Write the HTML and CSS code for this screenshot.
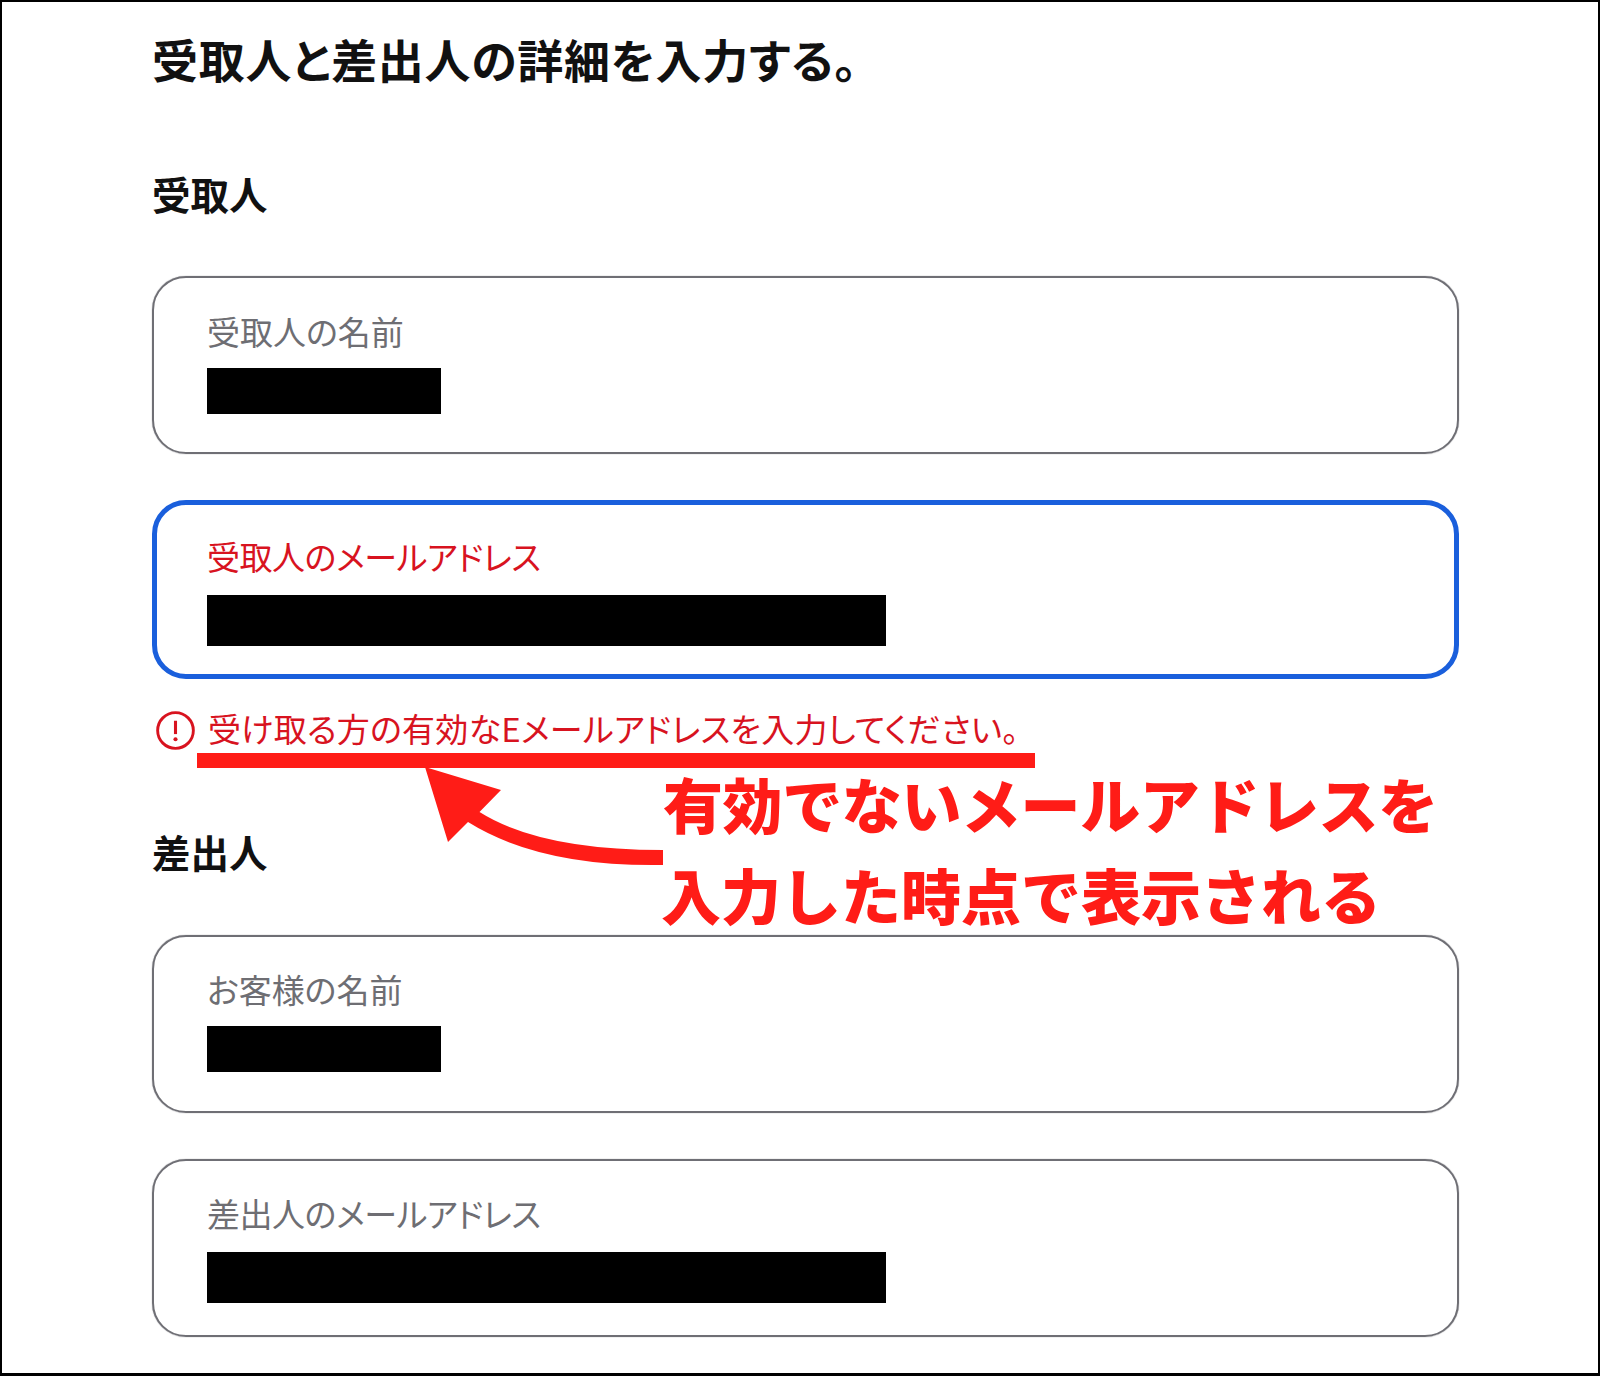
FILE: index.html
```html
<!DOCTYPE html>
<html lang="ja">
<head>
    <meta charset="UTF-8">
    <meta name="viewport" content="width=device-width, initial-scale=1.0">
    <title>受取人と差出人の詳細</title>
    <link rel="stylesheet" href="styles.css">
</head>
<body>
    <div class="page">
        <h1 class="title">受取人と差出人の詳細を入力する。</h1>

        <h2 class="section-title">受取人</h2>
        <div class="field">
            <div class="field-label">受取人の名前</div>
            <div class="redacted redacted-name"></div>
        </div>
        <div class="field field-error">
            <div class="field-label label-email">受取人のメールアドレス</div>
            <div class="redacted redacted-email"></div>
        </div>
        <div class="error-row">
            <svg class="error-icon" viewBox="0 0 38 38" aria-hidden="true">
                <circle cx="19" cy="19" r="17.4" fill="none" stroke="currentColor" stroke-width="2.8"/>
                <path d="M19 9.500v13" fill="none" stroke="currentColor" stroke-width="3"/>
                <circle cx="19" cy="27.500" r="2" fill="currentColor"/>
            </svg>
            <span>受け取る方の有効なEメールアドレスを入力してください。</span>
        </div>

        <h2 class="section-title section-sender">差出人</h2>
        <div class="field field-sender">
            <div class="field-label">お客様の名前</div>
            <div class="redacted redacted-name"></div>
        </div>
        <div class="field field-sender">
            <div class="field-label label-email">差出人のメールアドレス</div>
            <div class="redacted redacted-email"></div>
        </div>

        <!-- red annotation drawn over the form -->
        <div class="note-underline"></div>
        <svg class="note-arrow" viewBox="0 0 260 120" aria-hidden="true">
            <path d="M12 0L88 23L66.500 45Q127 83 250 83L250 98Q127 100 55 55L35 75Z" fill="#ff1c17"/>
        </svg>
        <div class="note-text">
            <div class="note-line-first">有効でないメールアドレスを</div>
            <div class="note-line-second">入力した時点で表示される</div>
        </div>
    </div>
</body>
</html>
```

FILE: styles.css
```css
* {
    box-sizing: border-box;
}

body {
    margin: 0;
    background: #ffffff;
    font-family: "Noto Sans CJK JP", "Noto Sans", sans-serif;
}

.page {
    position: relative;
    width: 1600px;
    height: 1376px;
    border: solid #000000;
    border-width: 2px 2px 3px 2px;
    padding: 26px 139px 0 150px;
    overflow: hidden;
}

.title {
    margin: 0 0 80px 0;
    font-size: 46px;
    line-height: 60px;
    font-weight: 700;
    letter-spacing: 0.7px;
    color: #111111;
    font-feature-settings: "palt";
}

.section-title {
    margin: 0 0 58px 0;
    font-size: 38.500px;
    line-height: 50px;
    font-weight: 700;
    color: #111111;
}

.section-sender {
    margin-top: 76px;
    margin-bottom: 59px;
}

.field {
    height: 178px;
    margin-bottom: 46px;
    padding: 31px 50px 0 53px;
    border: 2px solid #6f6f75;
    border-radius: 34px;
    box-shadow: 0 0 1px #6f6f75;
}

.field-label {
    font-size: 33px;
    line-height: 44px;
    color: #6e6e73;
    font-feature-settings: "palt";
}

.label-email {
    letter-spacing: -0.45px;
}

.field-error {
    height: 179px;
    margin-bottom: 0;
    padding: 29px 47px 0 50px;
    border: 5px solid #1a5fdc;
    box-shadow: none;
}

.field-error .field-label {
    color: #d8131f;
}

.field-sender {
    padding-top: 30px;
}

.redacted {
    background: #000000;
    margin-top: 15px;
}

.redacted-name {
    width: 234px;
    height: 46px;
}

.redacted-email {
    width: 679px;
    height: 51px;
}

.field-error .redacted-email {
    margin-top: 17px;
}

.field-sender .redacted-email {
    margin-top: 17px;
}

.error-row {
    display: flex;
    align-items: center;
    height: 44px;
    margin-top: 27px;
    padding-left: 4px;
    gap: 13px;
    font-size: 33px;
    line-height: 44px;
    letter-spacing: 0.25px;
    color: #d8131f;
    font-feature-settings: "palt";
}

.error-icon {
    width: 39px;
    height: 39px;
    margin-top: 4px;
    flex-shrink: 0;
}

.note-underline {
    position: absolute;
    left: 195px;
    top: 751px;
    width: 838px;
    height: 15px;
    background: #ff1c17;
}

.note-arrow {
    position: absolute;
    left: 411px;
    top: 765px;
    width: 260px;
    height: 120px;
}

.note-text {
    position: absolute;
    left: 661px;
    top: 755px;
    font-size: 60px;
    line-height: 91px;
    font-weight: 900;
    color: #ff1c17;
    white-space: nowrap;
}

.note-line-first {
    letter-spacing: -0.4px;
}

.note-line-second {
    margin-left: -2px;
}
```
